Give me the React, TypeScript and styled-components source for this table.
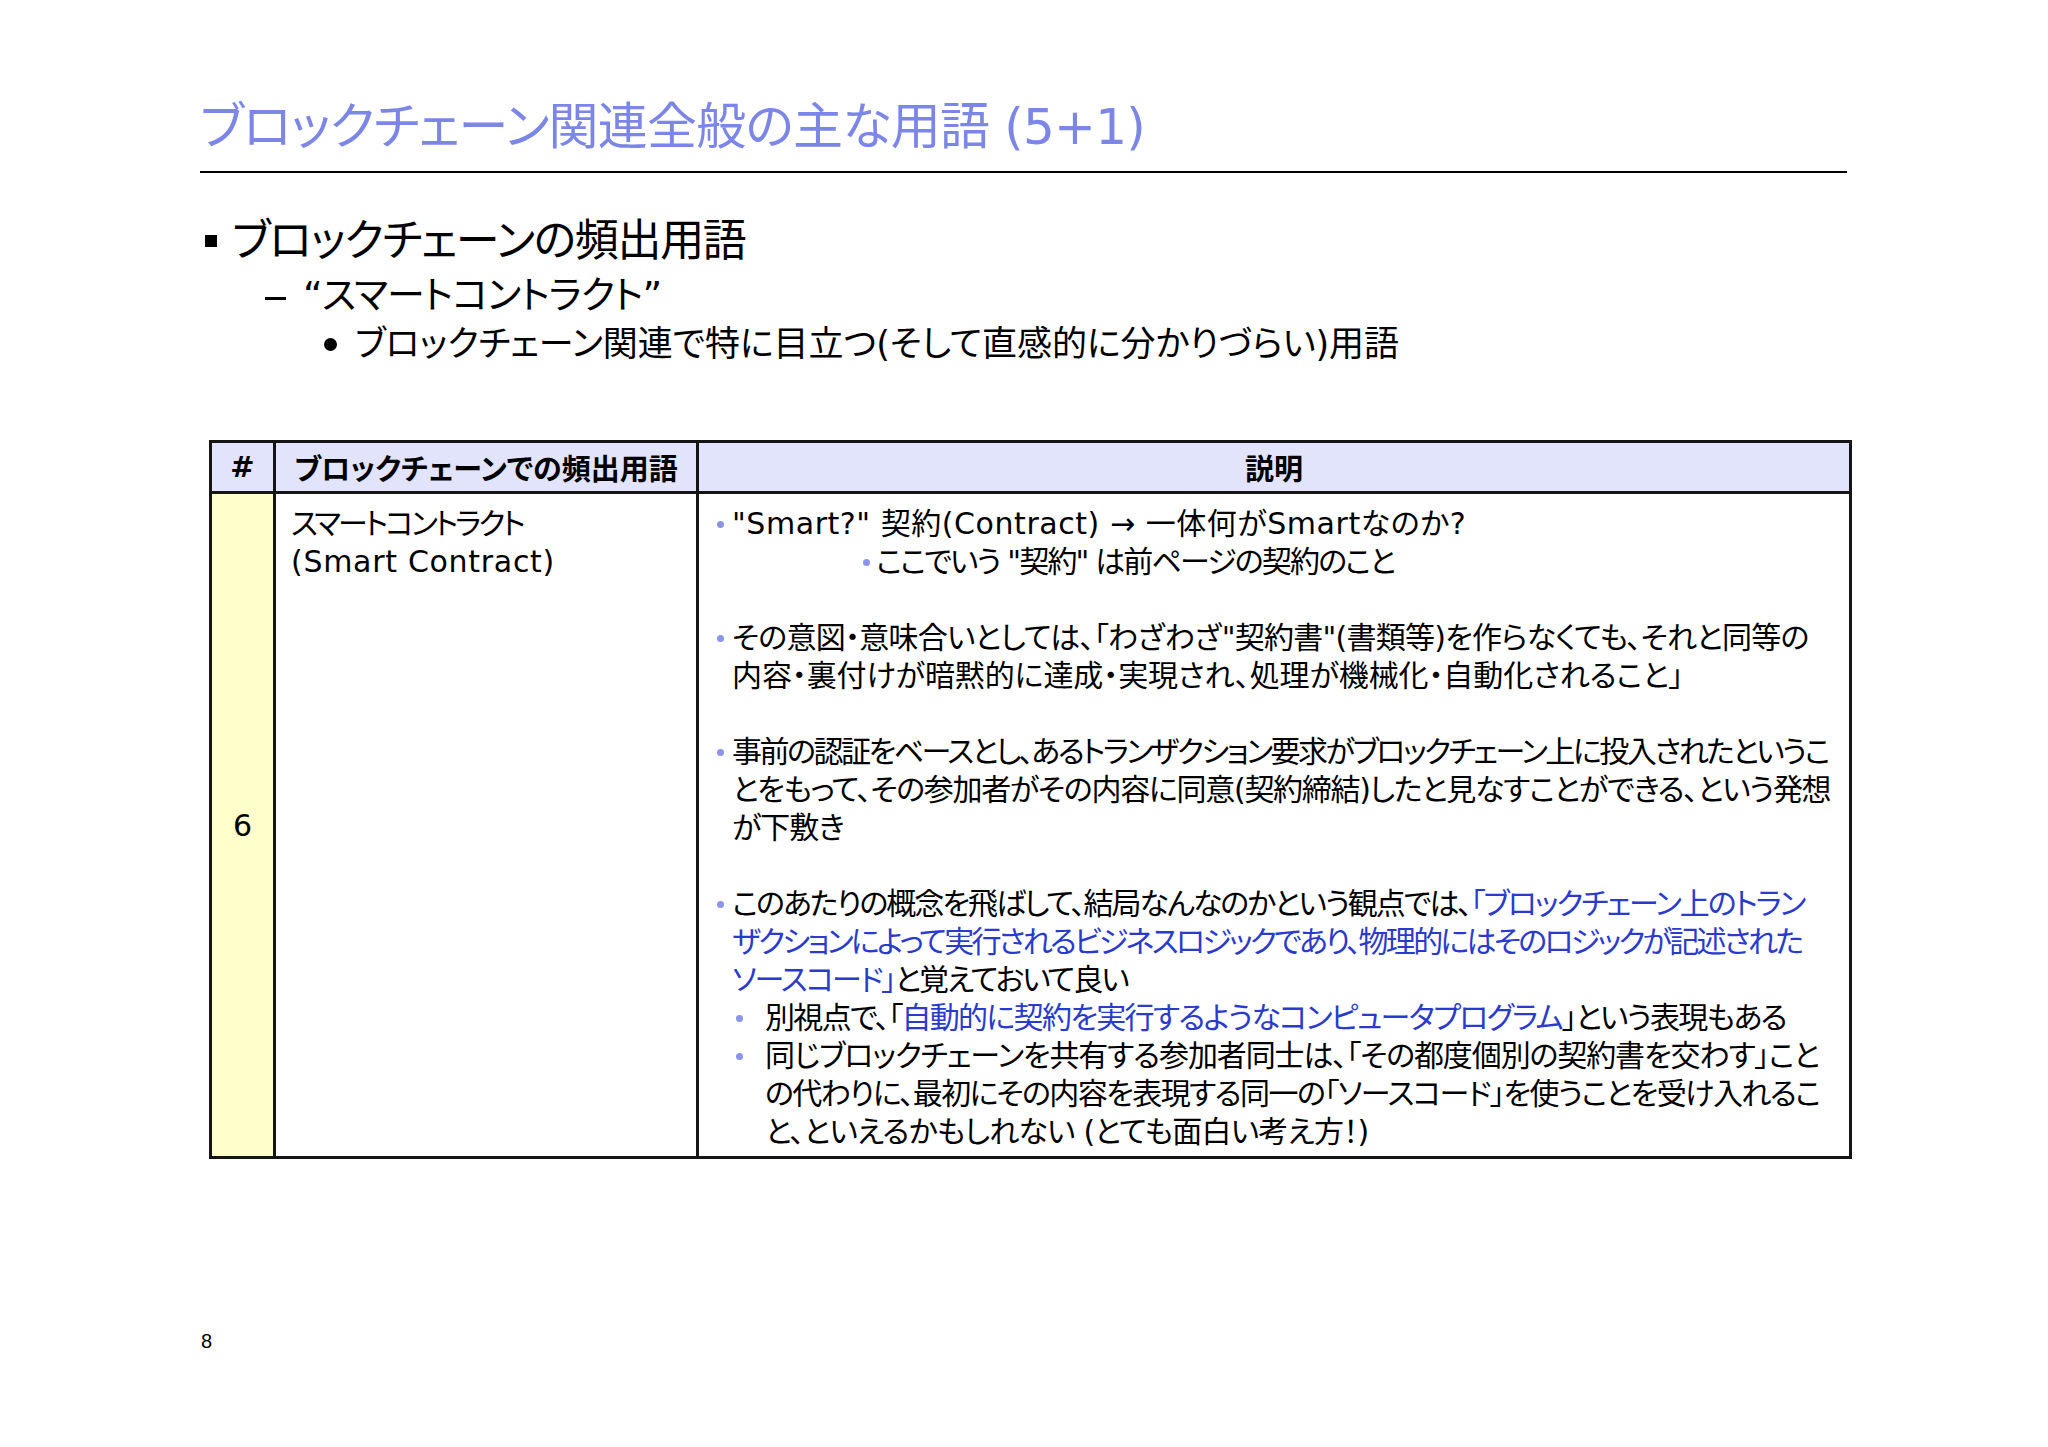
import React from "react";
import styled, { createGlobalStyle } from "styled-components";

const Global = createGlobalStyle`
  html, body { margin: 0; padding: 0; background: #ffffff; }
  body {
    font-family: "DejaVu Sans", "Noto Sans CJK JP", sans-serif;
    color: #000000;
  }
`;

const Slide = styled.div`
  width: 2048px;
  height: 1447px;
  box-sizing: border-box;
  padding: 97px 201px 0 200px;
  font-feature-settings: "palt";
  background: #ffffff;
`;

const Title = styled.h1`
  margin: 0;
  font-weight: 400;
  font-size: 50px;
  line-height: 60px;
  letter-spacing: -0.75px;
  color: #7b86e6;
  white-space: nowrap;
`;

const Rule = styled.div`
  margin-top: 14px;
  height: 2px;
  background: #000000;
`;

const Outline = styled.ul`
  list-style: none;
  margin: 41px 0 0;
  padding: 0;
`;

const OutlineItem = styled.li<{
  $indent: number;
  $size: number;
  $line: number;
  $gap: number;
  $track: number;
}>`
  display: flex;
  align-items: center;
  padding-left: ${(p) => p.$indent}px;
  font-size: ${(p) => p.$size}px;
  line-height: ${(p) => p.$line}px;
  letter-spacing: ${(p) => p.$track}px;
  gap: ${(p) => p.$gap}px;
  white-space: nowrap;
`;

const Square = styled.span`
  width: 12px;
  height: 12px;
  background: #000000;
  flex: none;
`;

const DashBar = styled.span`
  width: 21px;
  height: 3px;
  margin-top: 6px;
  background: #000000;
  flex: none;
`;

const Disc = styled.span`
  width: 13px;
  height: 13px;
  border-radius: 50%;
  background: #000000;
  flex: none;
`;

const Table = styled.table`
  margin: 75px 0 0 9px;
  width: 1643px;
  border-collapse: collapse;
  table-layout: fixed;
  border: 3px solid #151515;
`;

const HeadCell = styled.th`
  height: 48px;
  padding: 0;
  border: 3px solid #151515;
  background: #e1e4fb;
  font-size: 29px;
  font-weight: 700;
  text-align: center;
  vertical-align: middle;
  white-space: nowrap;
`;

const NumCell = styled.td`
  height: 662px;
  padding: 0;
  border: 3px solid #151515;
  background: #ffffcc;
  font-size: 30px;
  text-align: center;
  vertical-align: middle;
`;

const TermCell = styled.td`
  padding: 11px 0 0 15px;
  border: 3px solid #151515;
  vertical-align: top;
  font-size: 30px;
  line-height: 38px;
  white-space: nowrap;
`;

const DescCell = styled.td`
  padding: 11px 0 0 18px;
  border: 3px solid #151515;
  vertical-align: top;
  font-size: 30px;
  line-height: 38px;
  white-space: nowrap;
`;

const Point = styled.div<{ $indent: number; $after: boolean }>`
  display: flex;
  align-items: flex-start;
  padding-left: ${(p) => p.$indent}px;
  margin-bottom: ${(p) => (p.$after ? 38 : 0)}px;
`;

const DotBox = styled.span<{ $width: number }>`
  flex: none;
  width: ${(p) => p.$width}px;
  height: 38px;
  display: flex;
  align-items: center;
`;

const Dot = styled.span`
  width: 7px;
  height: 7px;
  border-radius: 50%;
  background: #8a94e8;
`;

const Lines = styled.div``;

const Line = styled.div<{ $track: number }>`
  letter-spacing: ${(p) => p.$track}px;
`;

const Blue = styled.span`
  color: #2a3acd;
`;

const PageNumber = styled.div`
  margin-top: 170px;
  font-family: "Liberation Sans", Arial, sans-serif;
  font-size: 20px;
  line-height: 24px;
  padding-left: 1px;
`;

type LineData = { text: React.ReactNode; track: number };

type PointData = {
  indent: number;
  marker: number;
  after: boolean;
  lines: LineData[];
};

const points: PointData[] = [
  {
    indent: 0,
    marker: 15,
    after: false,
    lines: [{ text: '"Smart?" 契約(Contract) → 一体何がSmartなのか?', track: 0.55 }],
  },
  {
    indent: 146,
    marker: 13,
    after: true,
    lines: [{ text: 'ここでいう "契約" は前ページの契約のこと', track: -1.85 }],
  },
  {
    indent: 0,
    marker: 15,
    after: true,
    lines: [
      {
        text: 'その意図・意味合いとしては、「わざわざ"契約書"(書類等)を作らなくても、それと同等の',
        track: -0.75,
      },
      { text: "内容・裏付けが暗黙的に達成・実現され、処理が機械化・自動化されること」", track: -0.1 },
    ],
  },
  {
    indent: 0,
    marker: 15,
    after: true,
    lines: [
      {
        text: "事前の認証をベースとし、あるトランザクション要求がブロックチェーン上に投入されたというこ",
        track: -2.48,
      },
      {
        text: "とをもって、その参加者がその内容に同意(契約締結)したと見なすことができる、という発想",
        track: -1.28,
      },
      { text: "が下敷き", track: -1 },
    ],
  },
  {
    indent: 0,
    marker: 15,
    after: false,
    lines: [
      {
        text: (
          <>
            このあたりの概念を飛ばして、結局なんなのかという観点では、<Blue>「ブロックチェーン上のトラン</Blue>
          </>
        ),
        track: -2.03,
      },
      {
        text: <Blue>ザクションによって実行されるビジネスロジックであり、物理的にはそのロジックが記述された</Blue>,
        track: -2.72,
      },
      {
        text: (
          <>
            <Blue>ソースコード」</Blue>と覚えておいて良い
          </>
        ),
        track: -2,
      },
    ],
  },
  {
    indent: 19,
    marker: 29,
    after: false,
    lines: [
      {
        text: (
          <>
            別視点で、「<Blue>自動的に契約を実行するようなコンピュータプログラム</Blue>」という表現もある
          </>
        ),
        track: -1.68,
      },
    ],
  },
  {
    indent: 19,
    marker: 29,
    after: false,
    lines: [
      { text: "同じブロックチェーンを共有する参加者同士は、「その都度個別の契約書を交わす」こと", track: -1.11 },
      { text: "の代わりに、最初にその内容を表現する同一の「ソースコード」を使うことを受け入れるこ", track: -1.56 },
      { text: "と、といえるかもしれない (とても面白い考え方！)", track: -0.75 },
    ],
  },
];

export default function App() {
  return (
    <>
      <Global />
      <Slide>
        <Title>ブロックチェーン関連全般の主な用語 (5+1)</Title>
        <Rule />
        <Outline>
          <OutlineItem $indent={5} $size={44} $line={54} $gap={15} $track={-1.3}>
            <Square />
            ブロックチェーンの頻出用語
          </OutlineItem>
          <OutlineItem $indent={65} $size={38} $line={55} $gap={17} $track={-0.85}>
            <DashBar />
            “スマートコントラクト”
          </OutlineItem>
          <OutlineItem $indent={124} $size={35} $line={42} $gap={18} $track={-0.05}>
            <Disc />
            ブロックチェーン関連で特に目立つ(そして直感的に分かりづらい)用語
          </OutlineItem>
        </Outline>
        <Table>
          <colgroup>
            <col style={{ width: 64 }} />
            <col style={{ width: 423 }} />
            <col />
          </colgroup>
          <thead>
            <tr>
              <HeadCell>#</HeadCell>
              <HeadCell>ブロックチェーンでの頻出用語</HeadCell>
              <HeadCell>説明</HeadCell>
            </tr>
          </thead>
          <tbody>
            <tr>
              <NumCell>6</NumCell>
              <TermCell>
                <Line $track={-2.8}>スマートコントラクト</Line>
                <Line $track={0.7}>(Smart Contract)</Line>
              </TermCell>
              <DescCell>
                {points.map((pt, i) => (
                  <Point key={i} $indent={pt.indent} $after={pt.after}>
                    <DotBox $width={pt.marker}>
                      <Dot />
                    </DotBox>
                    <Lines>
                      {pt.lines.map((ln, j) => (
                        <Line key={j} $track={ln.track}>
                          {ln.text}
                        </Line>
                      ))}
                    </Lines>
                  </Point>
                ))}
              </DescCell>
            </tr>
          </tbody>
        </Table>
        <PageNumber>8</PageNumber>
      </Slide>
    </>
  );
}
